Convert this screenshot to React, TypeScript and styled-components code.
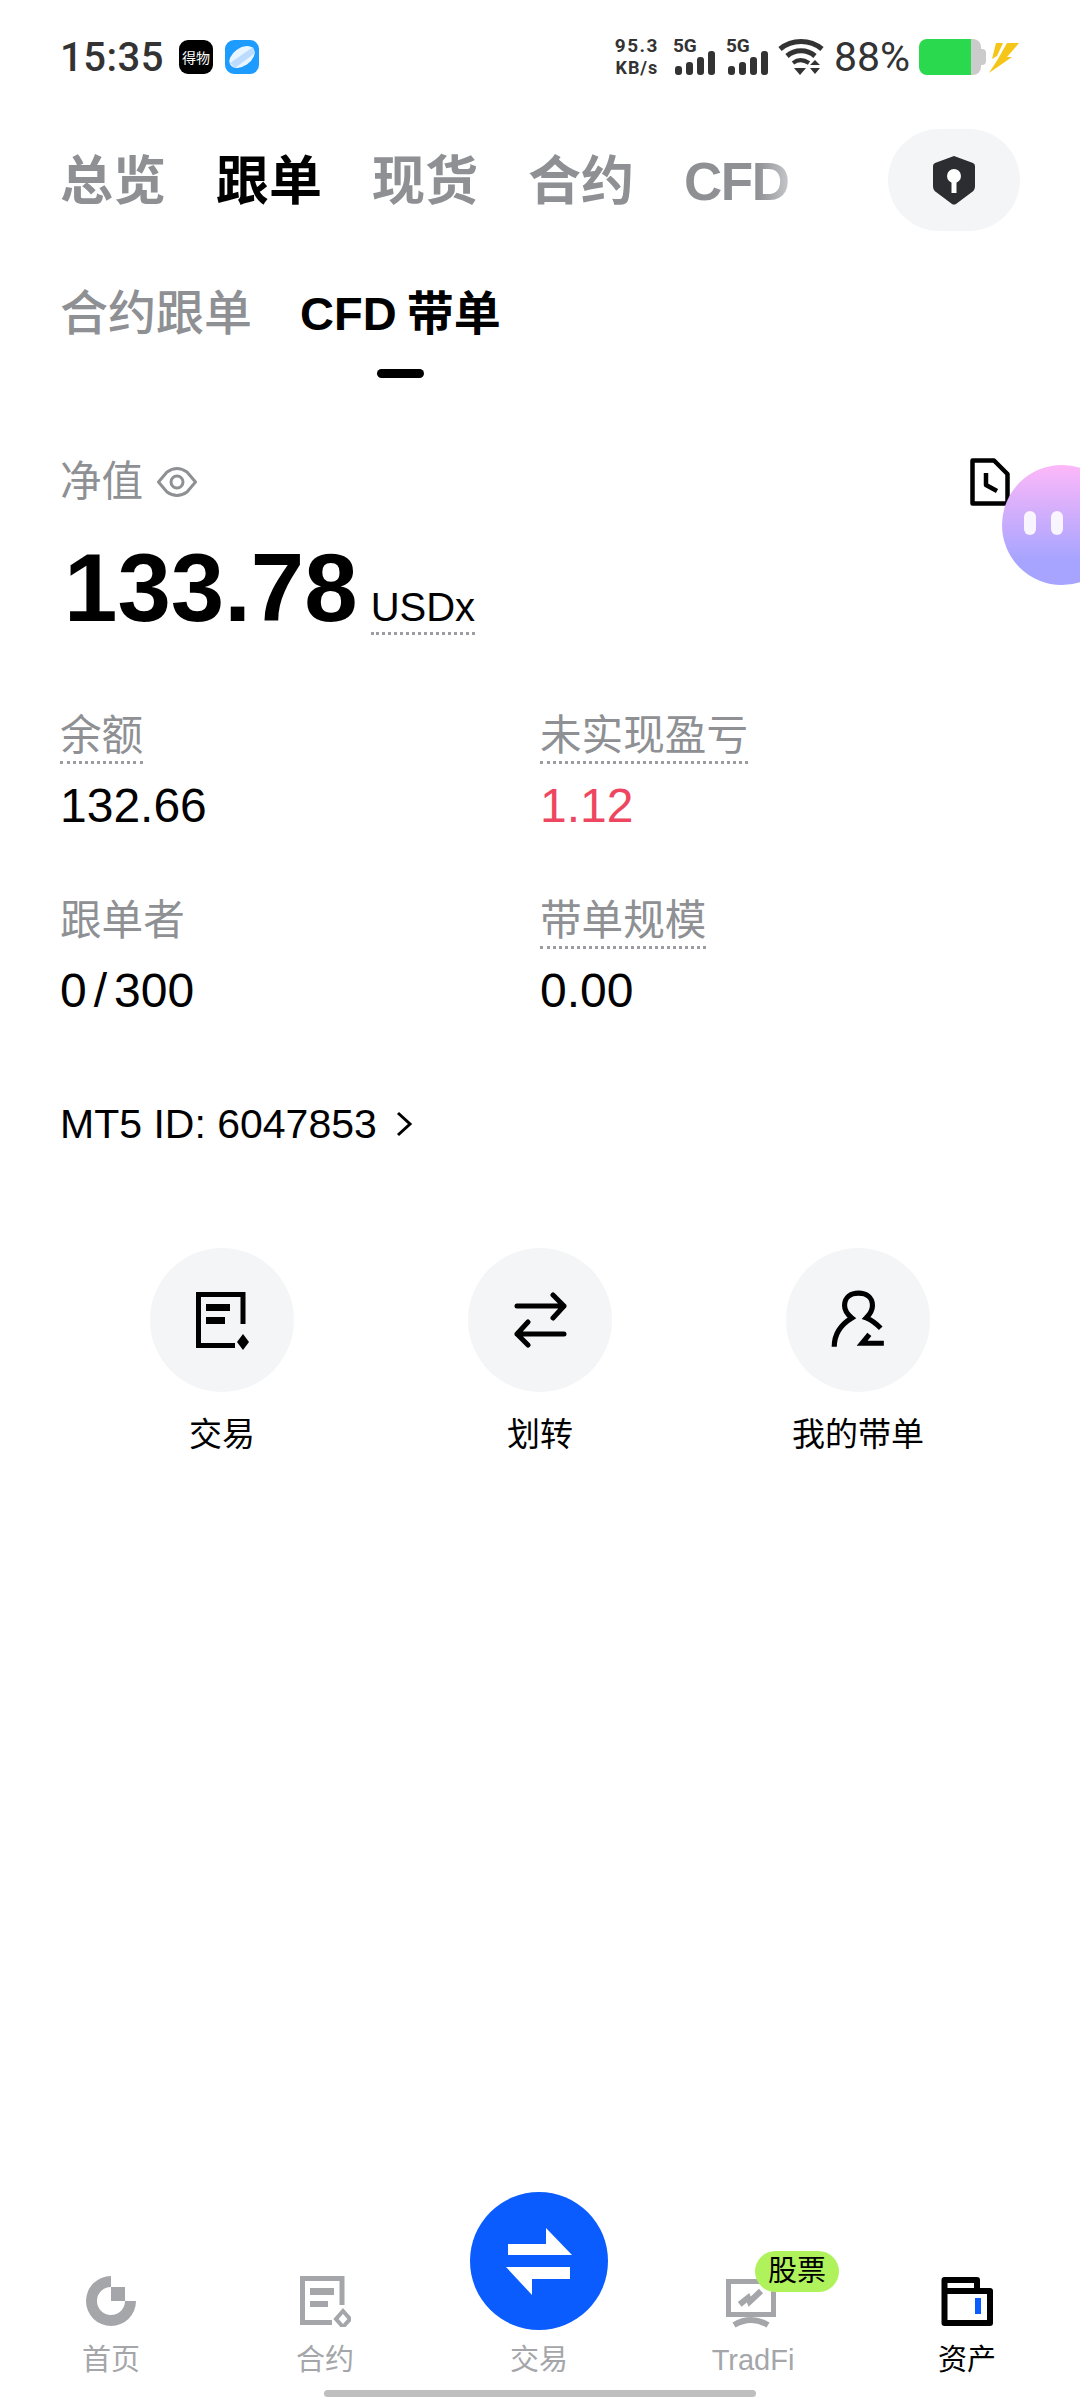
import React from 'react';
import styled, { createGlobalStyle } from 'styled-components';

const GlobalStyle = createGlobalStyle`
    html, body {
        margin: 0;
        padding: 0;
        background: #fff;
    }
    body {
        font-family: 'Liberation Sans', 'Noto Sans CJK SC', sans-serif;
    }
`;

const Page = styled.div`
    position: relative;
    width: 1080px;
    height: 2400px;
    overflow: hidden;
    display: flex;
    flex-direction: column;
    background: #fff;
    color: #000;
`;

/* status bar */
const StatusBar = styled.div`
    height: 114px;
    padding: 0 61px 0 60px;
    display: flex;
    align-items: center;
    justify-content: space-between;
    flex-shrink: 0;
`;

const StatusLeft = styled.div`
    display: flex;
    align-items: center;
`;

const Clock = styled.span`
    font-family: Roboto, sans-serif;
    font-weight: 500;
    font-size: 40px;
    letter-spacing: 0.5px;
    color: #333;
    margin-right: 15px;
`;

const AppBadge = styled.div<{ $bg: string }>`
    width: 34px;
    height: 34px;
    border-radius: 9px;
    background: ${(p) => p.$bg};
    margin-right: 12px;
    display: flex;
    align-items: center;
    justify-content: center;
    overflow: hidden;
    color: #fff;
    font-family: 'Noto Sans CJK SC', sans-serif;
    font-size: 14px;
    white-space: nowrap;
`;

const StatusRight = styled.div`
    display: flex;
    align-items: center;
    height: 36px;
`;

const Speed = styled.div`
    width: 46px;
    margin-right: 15px;
    display: flex;
    flex-direction: column;
    align-items: center;
    font-family: Roboto, sans-serif;
    font-weight: 700;
    color: #333;
    font-size: 19px;
    letter-spacing: 1.5px;
    line-height: 22px;
`;

const SpeedUnit = styled.span`
    font-size: 18px;
    letter-spacing: 1px;
    line-height: 22px;
`;

const Signal = styled.div<{ $gap: number }>`
    position: relative;
    width: 40px;
    height: 36px;
    margin-right: ${(p) => p.$gap}px;
    display: flex;
    align-items: flex-end;
    gap: 4px;
`;

const SignalLabel = styled.span`
    position: absolute;
    left: -2px;
    top: -3px;
    font-family: Roboto, sans-serif;
    font-weight: 700;
    font-size: 19px;
    line-height: 20px;
    color: #333;
`;

const SignalBar = styled.i<{ $h: number }>`
    display: block;
    width: 7px;
    height: ${(p) => p.$h}px;
    border-radius: 3px;
    background: #333;
`;

const Percent = styled.span`
    font-family: Roboto, sans-serif;
    font-size: 41px;
    color: #333;
    margin: 0 9px 0 10px;
`;

const Battery = styled.div`
    position: relative;
    width: 62px;
    height: 36px;
    border-radius: 8px;
    background: linear-gradient(90deg, #2bd94f 0 52px, #cbcbcb 52px);
    margin-right: 8px;
    &::after {
        content: '';
        position: absolute;
        right: -5px;
        top: 10px;
        width: 5px;
        height: 16px;
        border-radius: 0 4px 4px 0;
        background: #cbcbcb;
    }
`;

/* main tabs */
const TopTabs = styled.div`
    margin-top: 15px;
    height: 102px;
    padding: 0 60px;
    display: flex;
    align-items: center;
    gap: 50px;
    flex-shrink: 0;
`;

const TopTab = styled.span<{ $active?: boolean; $fade?: boolean }>`
    font-size: 53px;
    line-height: 60px;
    margin-top: 3px;
    font-weight: 700;
    color: ${(p) => (p.$active ? '#000' : '#8e9094')};
    ${(p) =>
        p.$fade &&
        `
        letter-spacing: -1.5px;
        background: linear-gradient(90deg, #8e9094 70%, #c4c5c8 100%);
        -webkit-background-clip: text;
        background-clip: text;
        color: transparent;
    `}
`;

const ShieldButton = styled.div`
    margin-left: auto;
    width: 132px;
    height: 102px;
    border-radius: 51px;
    background: #f4f5f6;
    display: flex;
    align-items: center;
    justify-content: center;
`;

const SubTabs = styled.div`
    margin-top: 53px;
    padding: 0 60px;
    display: flex;
    gap: 48px;
`;

const SubTab = styled.div<{ $active?: boolean }>`
    display: flex;
    flex-direction: column;
    align-items: center;
    font-size: ${(p) => (p.$active ? 47 : 48)}px;
    line-height: 60px;
    word-spacing: -3px;
    font-weight: ${(p) => (p.$active ? 700 : 500)};
    color: ${(p) => (p.$active ? '#000' : '#8e9094')};
    &::after {
        content: '';
        width: 47px;
        height: 9px;
        margin-top: 25px;
        border-radius: 5px;
        background: ${(p) => (p.$active ? '#000' : 'transparent')};
    }
`;

/* summary */
const Summary = styled.div`
    margin-top: 79px;
    padding: 0 60px;
`;

const NetRow = styled.div`
    height: 50px;
    padding-right: 10px;
    display: flex;
    align-items: center;
    justify-content: space-between;
`;

const NetLabel = styled.div`
    display: flex;
    align-items: center;
    gap: 14px;
    font-size: 41.6px;
    line-height: 50px;
    color: #8e9094;
`;

const AmountRow = styled.div`
    margin-top: 26px;
    display: flex;
    align-items: baseline;
    gap: 13px;
`;

const Amount = styled.span`
    font-size: 96px;
    line-height: 110px;
    font-weight: 700;
    padding-left: 4px;
`;

const Unit = styled.span`
    font-size: 40px;
    line-height: 50px;
    border-bottom: 3px dotted #9b9da0;
`;

const StatGrid = styled.div`
    margin-top: 68px;
    display: grid;
    grid-template-columns: 480px 1fr;
    row-gap: 62px;
`;

const Stat = styled.div`
    display: flex;
    flex-direction: column;
    align-items: flex-start;
`;

const StatLabel = styled.span<{ $dotted?: boolean }>`
    font-size: 41.6px;
    line-height: 50px;
    color: #8e9094;
    border-bottom: 3px ${(p) => (p.$dotted ? 'dotted #9b9da0' : 'solid transparent')};
`;

const StatValue = styled.span<{ $up?: boolean }>`
    margin-top: 14px;
    font-size: 48px;
    line-height: 56px;
    color: ${(p) => (p.$up ? '#ee4560' : '#000')};
`;

const Slash = styled.span`
    margin: 0 7px;
`;

const IdRow = styled.div`
    margin-top: 80px;
    display: flex;
    align-items: center;
    gap: 18px;
    font-size: 41px;
    line-height: 50px;
`;

/* actions */
const Actions = styled.div`
    margin-top: 99px;
    padding: 0 63px;
    display: grid;
    grid-template-columns: repeat(3, 318px);
`;

const Action = styled.div`
    display: flex;
    flex-direction: column;
    align-items: center;
    gap: 20px;
    font-size: 33px;
    line-height: 46px;
`;

const ActionCircle = styled.div`
    width: 144px;
    height: 144px;
    border-radius: 50%;
    background: #f4f5f6;
    display: flex;
    align-items: center;
    justify-content: center;
`;

/* bottom nav */
const BottomNav = styled.div`
    margin-top: auto;
    padding: 0 4px;
    display: grid;
    grid-template-columns: repeat(5, 214px);
    align-items: end;
`;

const NavItem = styled.div<{ $active?: boolean }>`
    position: relative;
    display: flex;
    flex-direction: column;
    align-items: center;
    gap: 10px;
    font-size: 29px;
    line-height: 38px;
    color: ${(p) => (p.$active ? '#000' : '#a4a6aa')};
`;

const NavIconSlot = styled.div`
    height: 60px;
    display: flex;
    align-items: center;
    justify-content: center;
`;

const TradeButton = styled.div`
    width: 138px;
    height: 138px;
    margin-bottom: 1px;
    border-radius: 50%;
    background: #0a5cff;
    display: flex;
    align-items: center;
    justify-content: center;
`;

const NavBadge = styled.span`
    position: absolute;
    left: 109px;
    top: -20px;
    width: 84px;
    height: 41px;
    border-radius: 21px;
    background: #aff25c;
    color: #000;
    font-size: 29px;
    line-height: 41px;
    text-align: center;
`;

const HomeIndicator = styled.div`
    width: 432px;
    height: 7px;
    flex-shrink: 0;
    margin: 11px auto 3px;
    border-radius: 4px;
    background: #bfbfbf;
`;

/* floating assistant */
const Bubble = styled.div`
    position: absolute;
    left: 1002px;
    top: 465px;
    width: 120px;
    height: 120px;
    border-radius: 50%;
    background: linear-gradient(180deg, #fdb8f9 0%, #a6a4ff 80%);
    padding: 46px 0 0 22px;
    box-sizing: border-box;
    display: flex;
    gap: 15px;
`;

const BubbleEye = styled.i`
    display: block;
    width: 12px;
    height: 24px;
    border-radius: 6px;
    background: rgba(255, 255, 255, 0.88);
`;

const ShieldIcon = () => (
    <svg width="42" height="49" viewBox="0 0 42 49">
        <path d="M21 0 L40 7 Q42 8 42 10 V30 Q42 34 39 36 L23 48 Q21 49 19 48 L3 36 Q0 34 0 30 V10 Q0 8 2 7 Z" fill="#2c2d30" />
        <circle cx="21" cy="20" r="7" fill="#fff" />
        <rect x="18.5" y="22" width="5" height="15" fill="#fff" />
    </svg>
);

const EyeIcon = () => (
    <svg width="40" height="32" viewBox="0 0 40 32" fill="none" stroke="#8e9094" strokeWidth="3">
        <path d="M1.5 16 L10 6 Q20 -1 30 6 L38.5 16 L30 26 Q20 33 10 26 Z" strokeLinejoin="round" />
        <circle cx="20" cy="16" r="6" />
    </svg>
);

const RecordIcon = () => (
    <svg width="40" height="48" viewBox="0 0 40 48" fill="none" stroke="#000" strokeWidth="4.5" strokeLinejoin="round">
        <path d="M2.5 2.5 H24 L37.5 16 V45.5 H2.5 Z" />
        <path d="M16 15 V27 L27 33" />
    </svg>
);

const ChevronIcon = () => (
    <svg width="18" height="26" viewBox="0 0 18 26" fill="none" stroke="#000" strokeWidth="3">
        <path d="M3 2 L15 13 L3 24" />
    </svg>
);

const TradeActionIcon = () => (
    <svg width="56" height="60" viewBox="0 0 56 60">
        <path d="M49 34 V4.5 H4.5 V55.5 H41" fill="none" stroke="#000" strokeWidth="5" />
        <rect x="12" y="14" width="24" height="7" fill="#000" />
        <rect x="12" y="27" width="19" height="7" fill="#000" />
        <path d="M49 46 L55 54 L49 62 L43 54 Z" fill="#000" transform="translate(0 -2)" />
    </svg>
);

const TransferIcon = () => (
    <svg width="56" height="56" viewBox="0 0 56 56" fill="none" stroke="#000" strokeWidth="5" strokeLinecap="round" strokeLinejoin="round">
        <path d="M5 14 H52 M41 3 L52 14 L41 26" />
        <path d="M52 42 H5 M16 30 L5 42 L16 53" />
    </svg>
);

const PersonIcon = () => (
    <svg width="60" height="62" viewBox="30 19 54 60" fill="none" stroke="#000" strokeWidth="5">
        <path d="M34 75 C34 62 41 53 51 47 C46 43 44 39 44 35 C44 27 50 23 57.5 23 C65 23 71 27 71 35 C71 39 69 43 65 47 C70 49 75 53 79 57" />
        <path d="M68 63 L61 71.5 H82" />
    </svg>
);

const HomeIcon = () => (
    <svg width="50" height="50" viewBox="0 0 50 50" fill="#a4a6aa">
        <path d="M25 0 A25 25 0 1 0 50 25 H39 A14 14 0 1 1 25 11 Z" />
        <rect x="25" y="11" width="14" height="14" />
    </svg>
);

const ContractIcon = () => (
    <svg width="52" height="52" viewBox="0 0 52 52">
        <path d="M43 30 V3.5 H3.5 V47.5 H33" fill="none" stroke="#a4a6aa" strokeWidth="5" />
        <rect x="11" y="13" width="24" height="7" fill="#a4a6aa" />
        <rect x="11" y="26" width="18" height="6" fill="#a4a6aa" />
        <path d="M44 36 L51 44 L44 52 L37 44 Z" fill="none" stroke="#a4a6aa" strokeWidth="4" />
    </svg>
);

const TradFiIcon = () => (
    <svg width="70" height="60" viewBox="0 0 70 60" fill="none" stroke="#a4a6aa">
        <rect x="10.5" y="10.5" width="45" height="33" strokeWidth="5" />
        <path d="M21.7 33.3 L30 26.7 L31.7 30.7 L43 20" strokeWidth="6" />
        <path d="M16 54 Q33 44 50 54" strokeWidth="6" />
    </svg>
);

const WalletIcon = () => (
    <svg width="62" height="60" viewBox="0 0 62 60" fill="none">
        <path d="M8.5 9 H41 V20 H54 V52 H8.5 Z M8.5 20 H41" stroke="#000" strokeWidth="6" strokeLinejoin="round" />
        <rect x="39" y="27" width="6" height="16" fill="#0a5cff" />
    </svg>
);

const SwapIcon = () => (
    <svg width="80" height="80" viewBox="0 0 80 80" fill="#fff">
        <path d="M9 23 H47 V7 L73 34 H9 Z" />
        <path d="M71 46 H7 L33 74 V58 H71 Z" />
    </svg>
);

const WifiIcon = () => (
    <svg width="46" height="36" viewBox="0 0 46 36" fill="none" stroke="#333" strokeWidth="5">
        <path d="M2 10 C14 0 32 0 44 10" />
        <path d="M9 17 C17 10 29 10 37 17" />
        <path d="M15 24 C20 20 25 20 31 24" strokeWidth="4" />
        <path d="M16 29 H28 L22 36 Z" fill="#333" stroke="none" />
        <path d="M32 26 L37 21 L42 26 Z M32 29 H42 L37 35 Z" fill="#333" stroke="none" />
    </svg>
);

const BoltIcon = () => (
    <svg width="30" height="31" viewBox="0 0 30 31" fill="#f5c518">
        <path d="M7 1 H14 L8 14 L3 17 Z" />
        <path d="M18 1 H30 L18 15 H23 L0 31 L9 17 Z" />
    </svg>
);

const PlanetIcon = () => (
    <svg width="34" height="34" viewBox="0 0 34 34">
        <ellipse cx="17" cy="17" rx="14" ry="9" fill="#fff" opacity="0.9" transform="rotate(-35 17 17)" />
        <path d="M5 23 L28 7 L30 13 L10 28 Z" fill="#bcdcff" />
    </svg>
);

const stats: { label: string; value: React.ReactNode; dotted?: boolean; up?: boolean }[] = [
    { label: '余额', value: '132.66', dotted: true },
    { label: '未实现盈亏', value: '1.12', dotted: true, up: true },
    {
        label: '跟单者',
        value: (
            <>
                0<Slash>/</Slash>300
            </>
        ),
    },
    { label: '带单规模', value: '0.00', dotted: true },
];

const App: React.FC = () => {
    return (
        <Page>
            <GlobalStyle />
            <StatusBar>
                <StatusLeft>
                    <Clock>15:35</Clock>
                    <AppBadge $bg="#000">得物</AppBadge>
                    <AppBadge $bg="#1e9bff">
                        <PlanetIcon />
                    </AppBadge>
                </StatusLeft>
                <StatusRight>
                    <Speed>
                        95.3
                        <SpeedUnit>KB/s</SpeedUnit>
                    </Speed>
                    <Signal $gap={13}>
                        <SignalLabel>5G</SignalLabel>
                        <SignalBar $h={9} />
                        <SignalBar $h={13} />
                        <SignalBar $h={18} />
                        <SignalBar $h={24} />
                    </Signal>
                    <Signal $gap={10}>
                        <SignalLabel>5G</SignalLabel>
                        <SignalBar $h={9} />
                        <SignalBar $h={13} />
                        <SignalBar $h={18} />
                        <SignalBar $h={24} />
                    </Signal>
                    <WifiIcon />
                    <Percent>88%</Percent>
                    <Battery />
                    <BoltIcon />
                </StatusRight>
            </StatusBar>

            <TopTabs>
                <TopTab>总览</TopTab>
                <TopTab $active>跟单</TopTab>
                <TopTab>现货</TopTab>
                <TopTab>合约</TopTab>
                <TopTab $fade>CFD</TopTab>
                <ShieldButton>
                    <ShieldIcon />
                </ShieldButton>
            </TopTabs>

            <SubTabs>
                <SubTab>合约跟单</SubTab>
                <SubTab $active>CFD 带单</SubTab>
            </SubTabs>

            <Summary>
                <NetRow>
                    <NetLabel>
                        净值
                        <EyeIcon />
                    </NetLabel>
                    <RecordIcon />
                </NetRow>
                <AmountRow>
                    <Amount>133.78</Amount>
                    <Unit>USDx</Unit>
                </AmountRow>
                <StatGrid>
                    {stats.map((s) => (
                        <Stat key={s.label}>
                            <StatLabel $dotted={s.dotted}>{s.label}</StatLabel>
                            <StatValue $up={s.up}>{s.value}</StatValue>
                        </Stat>
                    ))}
                </StatGrid>
                <IdRow>
                    MT5 ID: 6047853
                    <ChevronIcon />
                </IdRow>
            </Summary>

            <Actions>
                <Action>
                    <ActionCircle>
                        <TradeActionIcon />
                    </ActionCircle>
                    交易
                </Action>
                <Action>
                    <ActionCircle>
                        <TransferIcon />
                    </ActionCircle>
                    划转
                </Action>
                <Action>
                    <ActionCircle>
                        <PersonIcon />
                    </ActionCircle>
                    我的带单
                </Action>
            </Actions>

            <BottomNav>
                <NavItem>
                    <NavIconSlot>
                        <HomeIcon />
                    </NavIconSlot>
                    首页
                </NavItem>
                <NavItem>
                    <NavIconSlot>
                        <ContractIcon />
                    </NavIconSlot>
                    合约
                </NavItem>
                <NavItem>
                    <TradeButton>
                        <SwapIcon />
                    </TradeButton>
                    交易
                </NavItem>
                <NavItem>
                    <NavIconSlot>
                        <TradFiIcon />
                    </NavIconSlot>
                    TradFi
                    <NavBadge>股票</NavBadge>
                </NavItem>
                <NavItem $active>
                    <NavIconSlot>
                        <WalletIcon />
                    </NavIconSlot>
                    资产
                </NavItem>
            </BottomNav>
            <HomeIndicator />

            <Bubble>
                <BubbleEye />
                <BubbleEye />
            </Bubble>
        </Page>
    );
};

export default App;
